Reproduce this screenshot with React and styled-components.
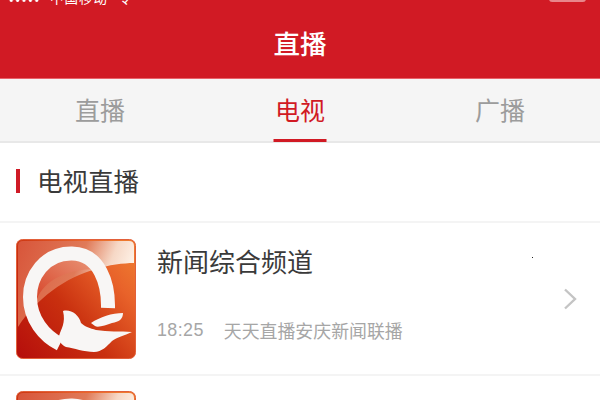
import React from "react";
import styled, { createGlobalStyle } from "styled-components";

const Global = createGlobalStyle`
  html, body { margin: 0; padding: 0; width: 600px; height: 400px; overflow: hidden; background: #fff; }
  * { box-sizing: border-box; }
`;
const FONT = `"Noto Sans CJK SC", "Noto Sans", sans-serif`;
const Page = styled.div`width:600px;height:400px;overflow:hidden;display:flex;flex-direction:column;font-family:${FONT};background:#fff;position:relative;`;
const Header = styled.header`flex:none;height:79px;background:#d11a24;position:relative;display:flex;align-items:center;justify-content:center;padding-top:8px;border-bottom:1px solid #e8626a;`;
const HeaderTitle = styled.h1`margin:0;font-size:26.5px;line-height:36px;font-weight:500;color:#fff;`;
const StatusText = styled.div`position:absolute;left:8px;top:-11px;height:16px;display:flex;align-items:center;gap:10px;font-size:13.5px;line-height:16px;color:#fff;white-space:nowrap;letter-spacing:1px;`;
const Dots = styled.span`width:32px;height:4px;margin-top:5px;background:radial-gradient(circle,#fff 1.6px,transparent 2px) 0 0/6.4px 4px;`;
const Battery = styled.div`position:absolute;left:549px;top:-8px;width:37px;height:10px;border-radius:3px;background:#e8868b;`;
const Tabs = styled.nav`flex:none;height:64px;background:#f5f5f5;display:grid;grid-template-columns:repeat(3,1fr);border-bottom:2px solid #e8e8e8;`;
const Tab = styled.div`position:relative;display:flex;align-items:center;justify-content:center;font-size:25px;color:${p=>p.$active?"#d11a24":"#9c9c9c"};padding-bottom:3px;`;
const Underline = styled.span`position:absolute;left:50%;bottom:-1px;transform:translateX(-50%);width:53px;height:3px;background:#d11a24;`;
const SectionHead = styled.div`flex:none;height:80px;display:flex;align-items:center;padding:0 16px 2px;gap:17px;border-bottom:2px solid #f4f4f4;`;
const Mark = styled.span`width:4px;height:24px;background:#cf1a26;`;
const SectionTitle = styled.h2`margin:-3px 0 0;font-size:25.5px;font-weight:400;color:#3a3a3a;`;
const Row = styled.div`flex:none;height:153px;display:flex;align-items:center;padding:0 23px 0 16px;gap:21px;border-bottom:2px solid #f4f4f4;`;
const Thumb = styled.div`flex:none;width:120px;height:120px;margin-top:1px;`;
const Body = styled.div`flex:1;min-width:0;display:flex;flex-direction:column;gap:39px;padding-bottom:13px;`;
const Title = styled.div`font-size:26px;line-height:36px;color:#3a3a3a;`;
const Meta = styled.div`font-size:17.9px;line-height:24px;color:#a6a6a6;display:flex;gap:20px;`;
const Time = styled.span`font-family:"Liberation Sans",sans-serif;letter-spacing:.4px;`;
const Partial = styled.div`flex:none;padding:15px 16px 0;height:40px;overflow:hidden;`;
const Speck = styled.span`position:absolute;left:532px;top:257px;width:1px;height:1px;background:#222;`;

const Logo = ({id}) => (
  <svg width="120" height="120" viewBox="0 0 120 120" aria-hidden="true">
    <defs>
      <linearGradient id={id+"a"} x1="0" y1="1" x2="1" y2=".15">
        <stop offset="0" stopColor="#b50d0b"/><stop offset=".45" stopColor="#c9300f"/><stop offset=".8" stopColor="#e8622a"/><stop offset="1" stopColor="#ee7a30"/>
      </linearGradient>
      <linearGradient id={id+"b"} x1="0" y1="0" x2="1" y2=".3">
        <stop offset="0" stopColor="#d8553a"/><stop offset=".55" stopColor="#e07a58"/><stop offset=".8" stopColor="#f6d8c6"/><stop offset="1" stopColor="#fff4ea"/>
      </linearGradient>
      <linearGradient id={id+"c"} x1="0" y1="1" x2="1" y2="0">
        <stop offset="0" stopColor="#d8472c"/><stop offset="1" stopColor="#ea9a7c"/>
      </linearGradient>
    </defs>
    <rect x=".5" y=".5" width="119" height="119" rx="6" fill={`url(#${id}a)`} stroke="#e2603a"/>
    <path d="M2 7Q2 2 7 2H113Q118 2 118 7V24C108 24 92 26 80 30C50 38 20 60 2 88Z" fill={`url(#${id}b)`}/>
    <path d="M21 60C28 42 50 30 80 30C75 20 65 15 52 15C32 18 20 40 21 60Z" fill={`url(#${id}c)`}/>
    <path d="M92 69C92.500 45 84 15 56 14.500C28 14 14 38 14 58C14 80 28 97 44 105" fill="none" stroke="#f8f6f5" strokeWidth="14"/>
    <path d="M47 72C55 70 63 76 65 84C69 88 74 89 80 91C92 93 104 92 116 93C108 97 101 98 96 102C91 107 86 113 78 113C68 113 58 109 50 108C46 106 42 102 43 97C45 90 50 84 47 72Z" fill="#f8f6f5"/>
    <path d="M75 84C84 78 96 74 107 74C107 80 103 83 96 84C90 86 82 89 79 87Z" fill="#f8f6f5"/>
    <path d="M30 90L38 96L34 98L42 104L36 105Z" fill="#f8f6f5"/>
  </svg>
);

export default function App(){
  return (
    <Page>
      <Global/>
      <Header>
        <StatusText><Dots/><span>中国移动</span><span>令</span></StatusText>
        <Battery/>
        <HeaderTitle>直播</HeaderTitle>
      </Header>
      <Tabs>
        <Tab>直播</Tab>
        <Tab $active>电视<Underline/></Tab>
        <Tab>广播</Tab>
      </Tabs>
      <SectionHead><Mark/><SectionTitle>电视直播</SectionTitle></SectionHead>
      <Row>
        <Thumb><Logo id="l1"/></Thumb>
        <Body>
          <Title>新闻综合频道</Title>
          <Meta><Time>18:25</Time><span>天天直播安庆新闻联播</span></Meta>
        </Body>
        <svg width="14" height="22" viewBox="0 0 14 22" aria-hidden="true"><path d="M2 1.5L12 11L2 20.5" fill="none" stroke="#c4c4c4" strokeWidth="2.4"/></svg>
      </Row>
      <Partial><Logo id="l2"/></Partial>
      <Speck/>
    </Page>
  );
}
